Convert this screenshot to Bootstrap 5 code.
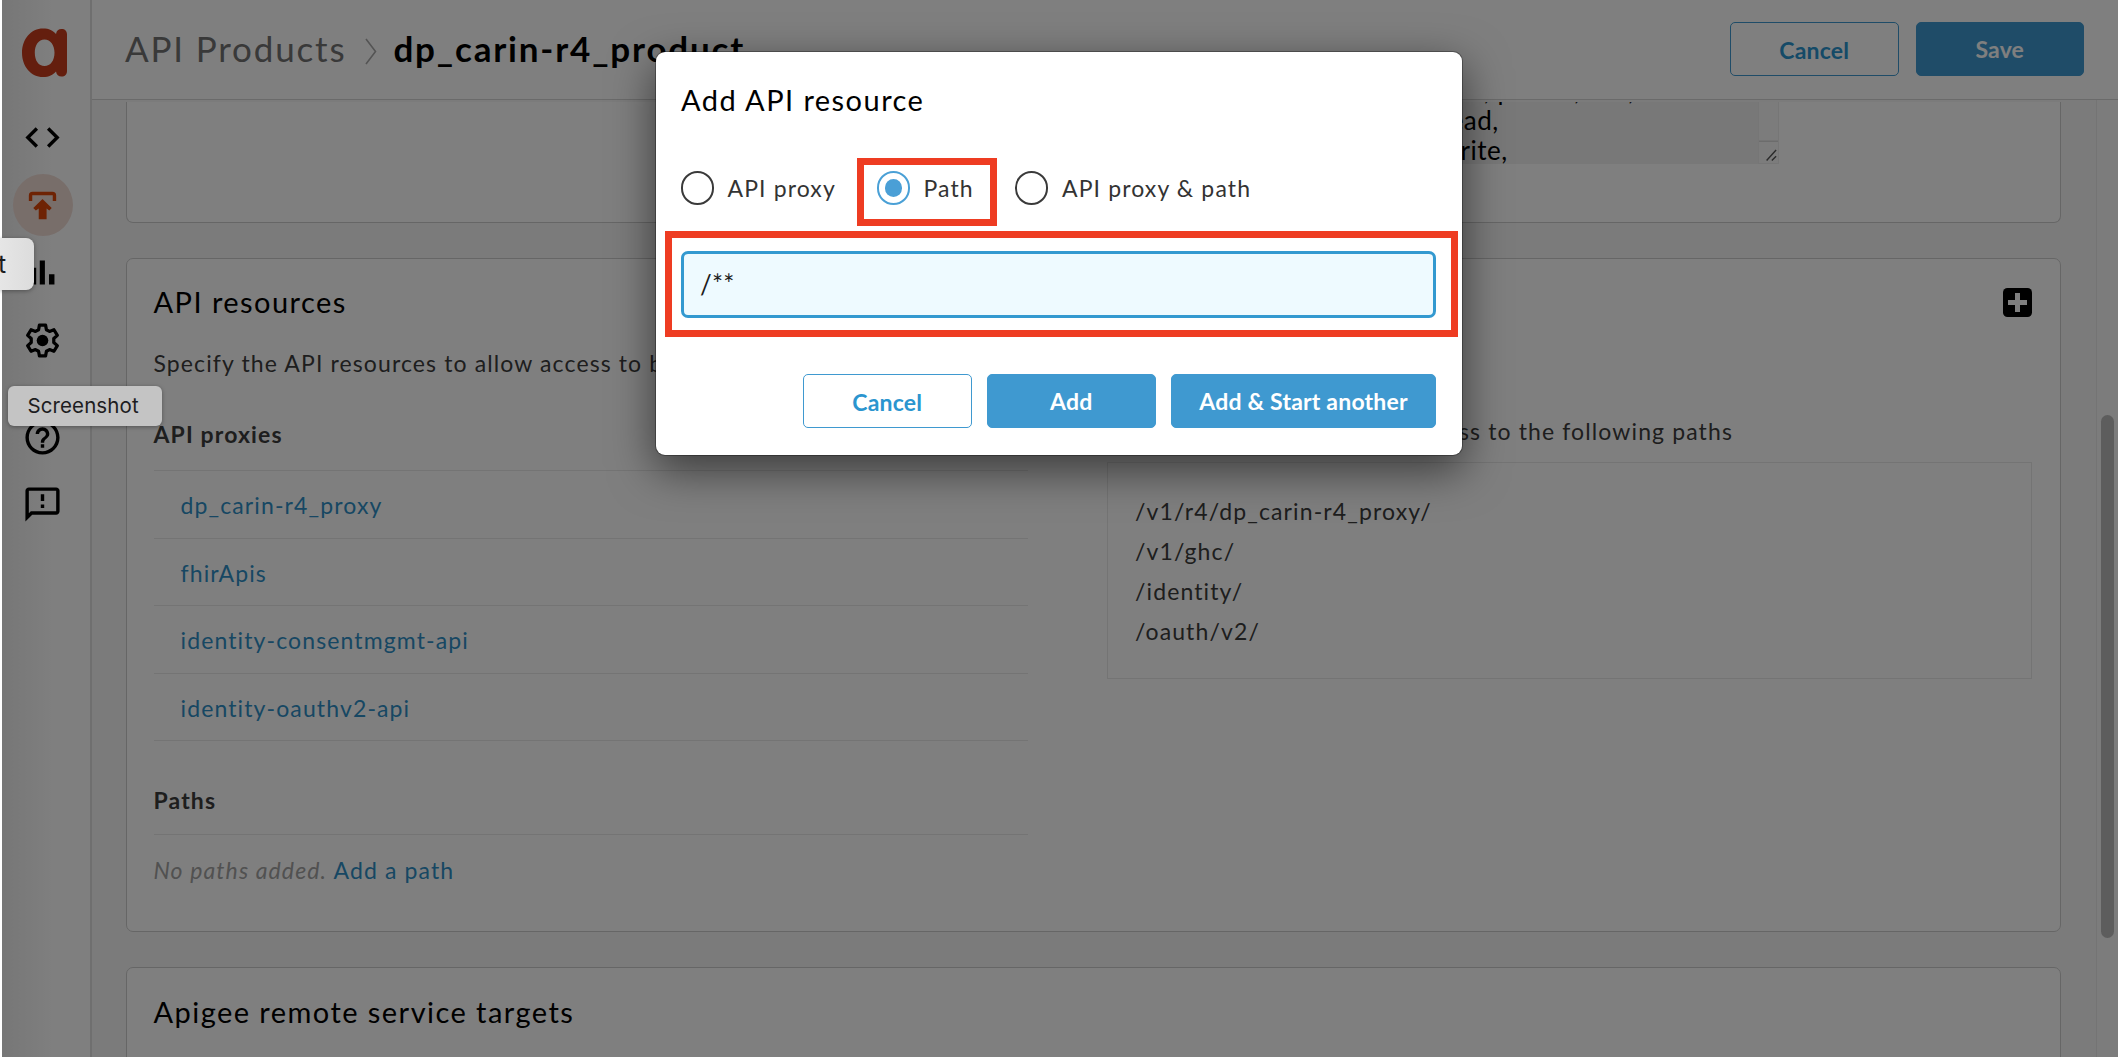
<!DOCTYPE html>
<html lang="en">
<head>
<meta charset="utf-8">
<title>API Products</title>
<link href="https://cdn.jsdelivr.net/npm/bootstrap@5.3.0/dist/css/bootstrap.min.css" rel="stylesheet">
<style>
:root{--blue:#3f99d0}
body{font-family:Lato,"Liberation Sans",sans-serif;font-size:23px;letter-spacing:1.12px;line-height:30px;color:#3c3c3c;background:#fff;overflow:hidden}
a{color:#2f8fc6;text-decoration:none}
.stage{width:2124px;height:1060px}
.app{width:2116px;height:1057px;margin-left:2px;background:#f7f7f7}
.side{width:90px;border-right:2px solid #dedede;background:linear-gradient(90deg,#eee,#fff 60%);padding-top:28px;padding-right:7px}
.side svg{display:block;flex:none}
.nav-on{width:60px;height:62px;border-radius:50%;background:#f1dcd5;margin-top:16.5px}
.s-logo{margin-left:4px}
.s-code{margin-top:38.5px}
.s-bars{margin-top:16px}
.s-gear{margin-top:27px}
.s-help{margin-top:56px}
.s-note{margin-top:26px}
.top{height:100px;border-bottom:1.5px solid #d4d4d4;background:#fff;padding:0 34px 2px 33px}
.crumb{font-size:35px;letter-spacing:1.82px;line-height:44px;margin-top:-2px}
.chev{margin:6px 16px 0 19px}
.btn-x{height:54px;min-width:168.5px;border-radius:5px;font-size:23px;font-weight:700;letter-spacing:.2px;line-height:30px;padding:0 20px;border:1.5px solid var(--blue);background:var(--blue);color:#fff}
.btn-o{background:#fff;color:#2b95cf;padding-top:2px}
.scroller{padding:2px 35px 0 34px}
.panel{width:1935px;border:1.5px solid #cdcdcd;border-radius:7px;background:#fff;margin-bottom:35px;padding:0 28px 0 26.5px}
.p-one{height:121px;border-top:0;border-radius:0 0 7px 7px;padding:0}
.p-two{height:673.5px}
.p-three{height:120px}
.h-sec{font-size:29px;letter-spacing:1.45px;line-height:36px;color:#000;font-weight:400;margin:0}
.scopes{height:62px;margin-left:1150px;width:502px;background:#f0f0f0}
.scopes pre{font-family:Lato,sans-serif;font-size:26px;letter-spacing:.5px;line-height:30px;color:#000;margin:-27px 0 0 49px;height:89px;overflow:hidden}
.track{width:21px;background:#f9f9f9;border:1.5px solid #ececec;border-top:0}
.lefty{width:874px}
.line-row{height:67.6px;border-top:1.5px solid #e8e8e8;padding-left:27px;padding-top:1.5px}
.sub-head{height:93.5px;padding-top:44px}
.pathbox{height:217px;width:925px;border:1.5px solid #e8e8e8;padding:28px 27px;line-height:40px}
.gutter{width:22px;border-left:1.5px solid #e8e8e8;background:#f8f8f8;padding-top:315px}
.thumb{width:13px;height:523px;border-radius:7px;background:#bababa}
.scrim{position:absolute;left:2px;top:0;width:2116px;height:1057px;background:rgba(0,0,0,.5)}
.dlg{position:absolute;left:656px;top:51.5px;width:806px;height:403px;border-radius:9px;background:#fff;box-shadow:0 0 0 1px rgba(0,0,0,.3),0 14px 44px 2px rgba(0,0,0,.52);padding:30px 26px 27px 25px;color:#333}
.opts{margin-top:53.5px;margin-left:-.5px}
.radio-x{width:33.5px;height:33.5px;border-radius:50%;border:2.5px solid #3a3a3a}
.radio-x.on{border-color:#4aa0d6}
.radio-x.on i{width:17.5px;height:17.5px;border-radius:50%;background:#4a9fd6}
.input-x{height:67px;margin-top:46px;border:3px solid #3399d0;border-radius:7px;background:#eefaff;font-size:26px;letter-spacing:.2px;color:#1c1c1c;padding-left:16px;padding-bottom:1px}
.hl{position:absolute;border:7px solid #ee3c22}
.hl-path{left:857px;top:158px;width:140px;height:67.5px}
.hl-input{left:664.5px;top:230.5px;width:793px;height:106px}
.tip{position:absolute;font-family:Inter,sans-serif;color:#1d1d1f;box-shadow:0 1px 4px rgba(0,0,0,.35)}
.tip-cut{left:0;top:238px;width:34px;height:52px;border-radius:0 8px 8px 0;background:linear-gradient(90deg,#e6e6e6,#dcdcdc);font-size:25px;line-height:52px;letter-spacing:0;text-indent:-2px}
.tip-shot{left:7.5px;top:386px;width:154px;height:40px;border-radius:6px;background:#c4c4c4;font-size:20.5px;line-height:39px;letter-spacing:.1px;padding-left:20px}
</style>
<script src="https://cdn.jsdelivr.net/npm/bootstrap@5.3.0/dist/js/bootstrap.bundle.min.js"></script>
</head>
<body>
<div class="stage position-relative overflow-hidden">
<div class="app d-flex overflow-hidden">
  <nav class="side d-flex flex-column align-items-center flex-shrink-0">
    <svg class="s-logo" width="46" height="50" viewBox="0 0 46 50"><path fill="#c83c1c" fill-rule="evenodd" d="M21 0.500C27 .5 31 2.500 34 6C34.500 2.500 36.500 1 39.500 1C43 1 45 3 45 6.500V43C45 46.500 43 48.500 39.500 48.500C36.500 48.500 34.500 47 34 43.500C31 47 27 49 21 49C9 49 0 38.500 0 24.700C0 11 9 .5 21 .5ZM22.500 11.500C16.500 11.500 12.800 17 12.800 24.700C12.800 32.500 16.500 38 22.500 38C28.500 38 32.500 32.500 32.500 24.700C32.500 17 28.500 11.500 22.500 11.500Z"/></svg>
    <svg class="s-code" width="41" height="41" viewBox="0 0 24 24"><path d="M9.400 16.600L4.800 12l4.600-4.600L8 6l-6 6 6 6 1.400-1.400zm5.200 0l4.600-4.600-4.600-4.600L16 6l6 6-6 6-1.400-1.400z"/></svg>
    <div class="nav-on d-flex align-items-center justify-content-center flex-shrink-0"><svg width="41" height="41" viewBox="0 0 24 24"><path fill="#dd4708" d="M4 9.400V6.200Q4 4 6.200 4H17.800Q20 4 20 6.200V9.400H18V6H6V9.400ZM12 8.200L17.400 13.400L16 14.900L14.400 13.700V20H9.800V13.700L8.100 14.900L6.600 13.400Z"/></svg></div>
    <svg class="s-bars" width="41" height="41" viewBox="0 0 24 24"><path d="M5 9.200h3.300V19H5zM10.400 5h3v14h-3zm5.400 8H19v6h-3.200z"/></svg>
    <svg class="s-gear" width="41" height="41" viewBox="0 0 24 24"><path fill="none" stroke="#000" stroke-width="1.900" stroke-linejoin="round" d="M10.200 3H13.800L14.300 5.700L16.100 6.700L18.700 5.700L20.700 9L18.600 10.800V13.200L20.700 15L18.700 18.300L16.100 17.300L14.300 18.300L13.800 21H10.200L9.700 18.300L7.900 17.300L5.300 18.300L3.300 15L5.400 13.200V10.800L3.300 9L5.300 5.700L7.900 6.700L9.700 5.700Z"/><circle cx="12" cy="12" r="3.400"/></svg>
    <svg class="s-help" width="41" height="41" viewBox="0 0 24 24"><path d="M11 18h2v-2h-2v2zm1-16C6.480 2 2 6.480 2 12s4.480 10 10 10 10-4.480 10-10S17.520 2 12 2zm0 18c-4.410 0-8-3.590-8-8s3.590-8 8-8 8 3.590 8 8-3.590 8-8 8zm0-14c-2.210 0-4 1.790-4 4h2c0-1.100.9-2 2-2s2 .9 2 2c0 2-3 1.750-3 5h2c0-2.250 3-2.500 3-5 0-2.210-1.790-4-4-4z"/></svg>
    <svg class="s-note" width="41" height="41" viewBox="0 0 24 24"><path d="M20 2H4c-1.100 0-1.990.9-1.990 2L2 22l4-4h14c1.100 0 2-.9 2-2V4c0-1.100-.9-2-2-2zm0 14H5.170L4 17.170V4h16v12zM11 12h2v2h-2zm0-6h2v4h-2z"/></svg>
  </nav>
  <div class="flex-grow-1 d-flex flex-column overflow-hidden">
    <header class="top d-flex align-items-center flex-shrink-0">
      <span class="crumb" style="color:#727272">API Products</span>
      <svg class="chev" width="12" height="27" viewBox="0 0 12 27"><path fill="none" stroke="#a8a8a8" stroke-width="1.600" d="M1 1L10.500 13.500L1 26"/></svg>
      <span class="crumb fw-bold text-black">dp_carin-r4_product</span>
      <div class="ms-auto d-flex" style="gap:17px"><button class="btn btn-x btn-o">Cancel</button><button class="btn btn-x">Save</button></div>
    </header>
    <div class="d-flex flex-grow-1 overflow-hidden">
      <main class="scroller flex-grow-1 overflow-hidden">
        <section class="panel p-one overflow-hidden">
          <div class="scopes d-flex">
            <pre class="flex-grow-1">email, openid, profile, fhir,
patient/*.read,
patient/*.write,</pre>
            <div class="track d-flex align-items-end"><svg width="20" height="23" viewBox="0 0 20 23"><path d="M0 .7H20" stroke="#d8d8d8" stroke-width="1.500"/><path d="M8 21L18 10M13.500 21L18 16.500" stroke="#555" stroke-width="1.500"/></svg></div>
          </div>
        </section>
        <section class="panel p-two">
          <div class="d-flex justify-content-between align-items-center" style="padding-top:25px">
            <h2 class="h-sec">API resources</h2>
            <svg width="29" height="29" viewBox="0 0 29 29"><rect width="29" height="29" rx="4.500"/><path d="M14.500 5V24M5 14.500H24" stroke="#fff" stroke-width="5"/></svg>
          </div>
          <div style="margin-top:27.500px">Specify the API resources to allow access to by adding API proxies, paths, or both.</div>
          <div class="d-flex justify-content-between">
            <div class="lefty">
              <div class="fw-bold" style="margin-top:41.500px;margin-bottom:21px">API proxies</div>
              <div class="line-row d-flex align-items-center"><a href="#">dp_carin-r4_proxy</a></div>
              <div class="line-row d-flex align-items-center"><a href="#">fhirApis</a></div>
              <div class="line-row d-flex align-items-center"><a href="#">identity-consentmgmt-api</a></div>
              <div class="line-row d-flex align-items-center"><a href="#">identity-oauthv2-api</a></div>
              <div class="line-row sub-head fw-bold ps-0">Paths</div>
              <div class="line-row d-flex align-items-center ps-0" style="height:70px"><em style="color:#a2a2a2">No paths added.</em><a href="#" style="margin-left:6.500px">Add a path</a></div>
            </div>
            <div>
              <div class="text-end" style="width:626px;margin-top:38.500px;margin-bottom:16px">These API proxies allow access to the following paths</div>
              <div class="pathbox"><div>/v1/r4/dp_carin-r4_proxy/</div><div>/v1/ghc/</div><div>/identity/</div><div>/oauth/v2/</div></div>
            </div>
          </div>
        </section>
        <section class="panel p-three"><h2 class="h-sec" style="padding-top:26px">Apigee remote service targets</h2></section>
      </main>
      <div class="gutter d-flex justify-content-center flex-shrink-0"><div class="thumb"></div></div>
    </div>
  </div>
</div>
<div class="scrim"></div>
<div class="dlg d-flex flex-column">
  <h1 class="h-sec">Add API resource</h1>
  <div class="opts d-flex align-items-center">
    <span class="radio-x"></span><span style="margin-left:13.500px;width:149px">API proxy</span>
    <span class="radio-x on d-flex align-items-center justify-content-center"><i></i></span><span style="margin-left:13.500px;width:91px">Path</span>
    <span class="radio-x"></span><span style="margin-left:14px">API proxy &amp; path</span>
  </div>
  <div class="input-x d-flex align-items-center">/**</div>
  <div class="d-flex justify-content-end mt-auto" style="gap:15.500px"><button class="btn btn-x btn-o">Cancel</button><button class="btn btn-x">Add</button><button class="btn btn-x" style="width:265px">Add &amp; Start another</button></div>
</div>
<div class="hl hl-path"></div>
<div class="hl hl-input"></div>
<div class="tip tip-cut">t</div>
<div class="tip tip-shot">Screenshot</div>
</div>
</body>
</html>
